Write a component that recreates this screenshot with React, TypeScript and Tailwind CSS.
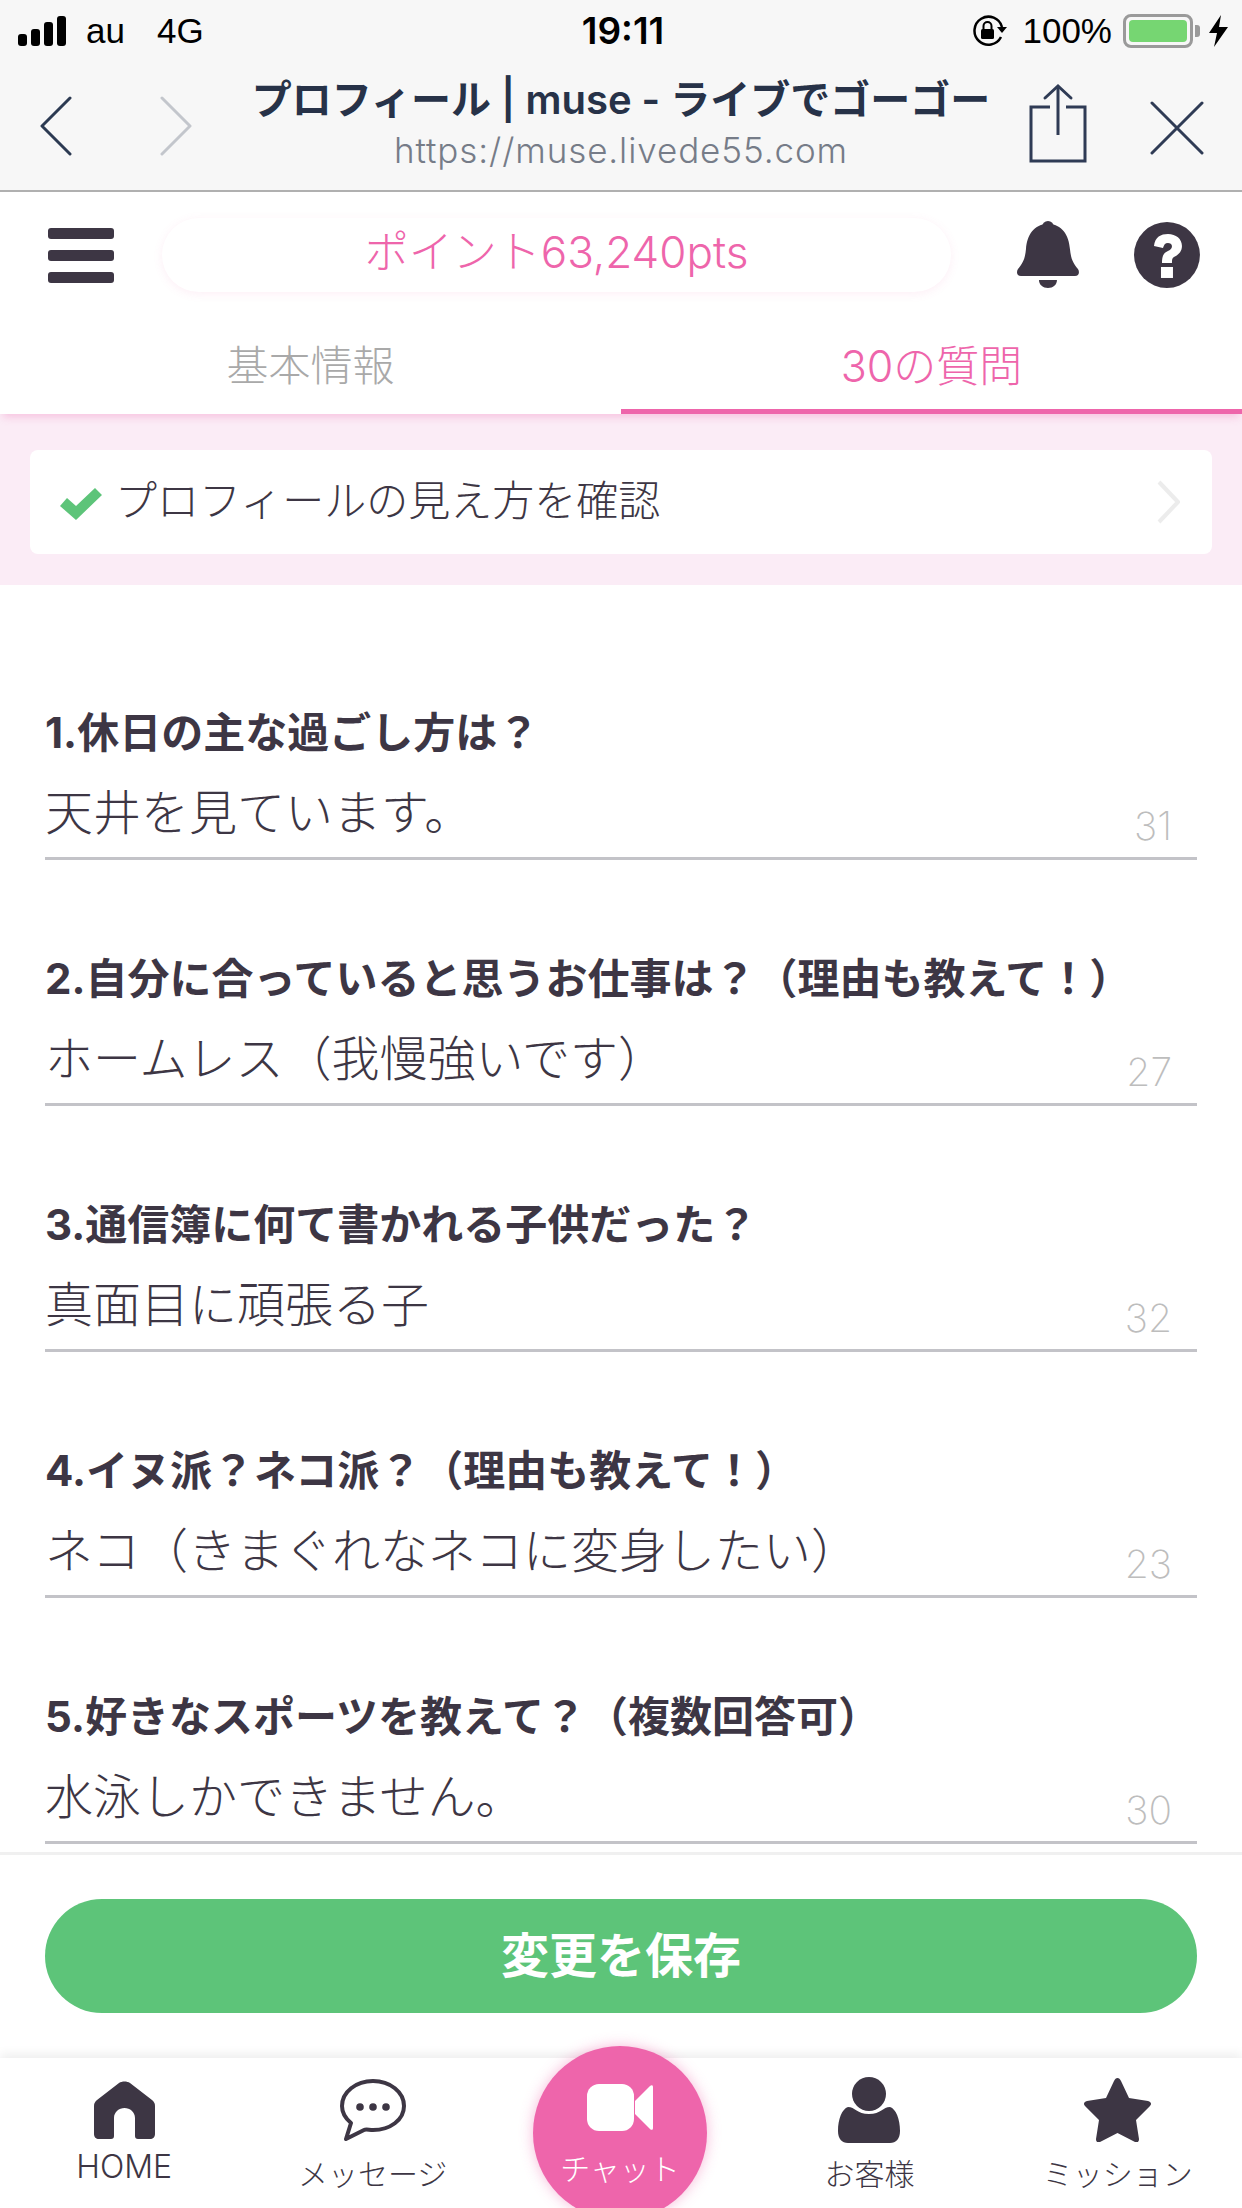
const INK = '#3d3644'

const questions = [
  { label: '1.休日の主な過ごし方は？', answer: '天井を見ています。', count: 31 },
  { label: '2.自分に合っていると思うお仕事は？（理由も教えて！）', answer: 'ホームレス（我慢強いです）', count: 27 },
  { label: '3.通信簿に何て書かれる子供だった？', answer: '真面目に頑張る子', count: 32 },
  { label: '4.イヌ派？ネコ派？（理由も教えて！）', answer: 'ネコ（きまぐれなネコに変身したい）', count: 23 },
  { label: '5.好きなスポーツを教えて？（複数回答可）', answer: '水泳しかできません。', count: 30 },
]

function StatusBar() {
  return (
    <div className="h-[60px] pt-[2px] flex items-center justify-between pl-[18px] pr-[14px] text-black text-[35px] font-['Liberation_Sans',sans-serif]">
      <div className="w-[420px] flex items-center">
        <svg width="48" height="30" viewBox="0 0 48 30" fill="#000">
          <rect x="0" y="18" width="9" height="12" rx="3" />
          <rect x="13" y="13" width="9" height="17" rx="3" />
          <rect x="26" y="6" width="9" height="24" rx="3" />
          <rect x="39" y="0" width="9" height="30" rx="3" />
        </svg>
        <span className="ml-[20px]">au</span>
        <span className="ml-[32px]">4G</span>
      </div>
      <span className="font-['Inter',sans-serif] font-semibold text-[37px]">19:11</span>
      <div className="w-[420px] flex items-center justify-end">
        <svg width="36" height="32" viewBox="0 0 36 32" fill="none">
          <path d="M29 22 A14 14 0 1 1 30 12" stroke="#000" strokeWidth="2.5" />
          <path d="M25 12 H35 L30 18 Z" fill="#000" />
          <rect x="9" y="14" width="13" height="10" rx="1.5" fill="#000" />
          <path d="M11.5 14 V11 A4 4 0 0 1 19.5 11 V14" stroke="#000" strokeWidth="2" />
        </svg>
        <span className="ml-[14px]">100%</span>
        <div className="ml-[11px] w-[70px] h-[34px] rounded-[8px] border-[3px] border-[#9a9a9a] p-[3px]">
          <div className="w-full h-full rounded-[4px] bg-[#76d672]"></div>
        </div>
        <div className="ml-[2px] w-[5px] h-[12px] bg-[#9a9a9a] rounded-r-[3px]"></div>
        <svg className="ml-[9px]" width="19" height="32" viewBox="0 0 19 32" fill="#000">
          <path d="M12 0 L0 18 H8 L5 32 L19 12 H10 Z" />
        </svg>
      </div>
    </div>
  )
}

function BrowserBar() {
  return (
    <div className="h-[132px] flex items-center border-b-[2px] border-[#b0b0b0]">
      <div className="w-[232px] flex items-center pl-[40px] pt-[2px]">
        <svg width="32" height="60" viewBox="0 0 32 60" fill="none" stroke="#2c3a52" strokeWidth="3" strokeLinecap="round" strokeLinejoin="round">
          <path d="M30 2 L2 30 L30 58" />
        </svg>
        <svg className="ml-[88px]" width="32" height="60" viewBox="0 0 32 60" fill="none" stroke="#c3c6cc" strokeWidth="3" strokeLinecap="round" strokeLinejoin="round">
          <path d="M2 2 L30 30 L2 58" />
        </svg>
      </div>
      <div className="flex-1 flex flex-col items-center min-w-0">
        <p className="text-[40px] leading-[50px] font-semibold text-[#273248] whitespace-nowrap">プロフィール | muse - ライブでゴーゴー</p>
        <p className="text-[35px] leading-[50px] tracking-[0.9px] font-light text-[#767c88] whitespace-nowrap">https://muse.livede55.com</p>
      </div>
      <div className="w-[232px] flex items-center pl-[19px]">
        <svg className="mb-[4px]" width="58" height="80" viewBox="0 0 58 80" fill="none" stroke="#2f3b55" strokeWidth="3">
          <path d="M21 24 H2 V78 H56 V24 H37" />
          <path d="M29 52 V3" />
          <path d="M16 15 L29 3 L42 15" strokeLinecap="round" />
        </svg>
        <svg className="ml-[63px] mt-[5px]" width="54" height="54" viewBox="0 0 54 54" fill="none" stroke="#2f3b55" strokeWidth="3" strokeLinecap="round">
          <path d="M2 2 L52 52 M52 2 L2 52" />
        </svg>
      </div>
    </div>
  )
}

function Header() {
  return (
    <div className="h-[120px] flex items-center pl-[48px] pr-[42px] pt-[6px]">
      <div className="w-[66px] flex flex-col gap-[11px]">
        <div className="h-[11px] rounded-[3px] bg-[#3d3644]"></div>
        <div className="h-[11px] rounded-[3px] bg-[#3d3644]"></div>
        <div className="h-[11px] rounded-[3px] bg-[#3d3644]"></div>
      </div>
      <div className="ml-[48px] w-[790px] h-[74px] pb-[6px] rounded-full bg-white shadow-[0_2px_10px_rgba(240,100,170,0.1)] flex items-center justify-center text-[#ee65ab] text-[44px] font-light">
        ポイント63,240pts
      </div>
      <svg className="ml-[65px]" width="64" height="68" viewBox="0 0 64 68" fill={INK}>
        <circle cx="32" cy="6" r="6" />
        <path d="M32 3 C46 3 53 14 54 28 C55 38 57 42 62 48 C64 51 63 55 59 55 H5 C1 55 0 51 2 48 C7 42 9 38 10 28 C11 14 18 3 32 3 Z" />
        <path d="M23 59 H41 C41 64 37 67 32 67 C27 67 23 64 23 59 Z" />
      </svg>
      <svg className="ml-[54px]" width="66" height="66" viewBox="0 0 66 66">
        <circle cx="33" cy="33" r="33" fill={INK} />
        <path d="M20 24 C21 15 27 12 34 12 C42 12 48 17 48 24 C48 30 44 33 40 35 C38 36 38 38 38 41 H28 C28 35 29 31 34 29 C37 28 38 26 38 24 C38 22 36 21 34 21 C31 21 30 23 29 26 Z" fill="#fff" />
        <rect x="27" y="45" width="12" height="11" fill="#fff" />
      </svg>
    </div>
  )
}

function Tabs() {
  return (
    <div className="relative z-10 grid grid-cols-2 h-[102px] bg-white shadow-[0_6px_8px_-3px_rgba(238,101,171,0.3)]">
      <div className="flex items-start justify-center pt-[24px] text-[42px] leading-[60px] font-light text-[#a9a9a9]">基本情報</div>
      <div className="flex items-start justify-center pt-[24px] text-[43px] leading-[60px] font-light text-[#ee65ab] border-b-[5px] border-[#ee65ab]">30の質問</div>
    </div>
  )
}

function PreviewLink() {
  return (
    <div className="bg-[#fbecf6] h-[171px] px-[30px] pt-[36px]">
      <div className="h-[104px] rounded-[8px] bg-white flex items-center pl-[30px] pr-[30px]">
        <svg className="mt-[4px]" width="42" height="32" viewBox="0 0 42 32" fill="#5dc479">
          <path d="M0 18 L7 10 L16 18 L35 0 L42 7 L16 32 Z" />
        </svg>
        <span className="ml-[13px] mb-[3px] flex-1 text-[42px] font-light text-[#3d3644]">プロフィールの見え方を確認</span>
        <svg width="26" height="44" viewBox="0 0 26 44" fill="none" stroke="#ececec" strokeWidth="4" strokeLinejoin="round">
          <path d="M3 2 L22 22 L3 42" />
        </svg>
      </div>
    </div>
  )
}

function QuestionRow({ label, answer, count }: { label: string; answer: string; count: number }) {
  return (
    <div className="mb-[91px]">
      <p className="text-[42px] leading-[56px] font-bold text-[#3d3644] whitespace-nowrap">{label}</p>
      <div className="h-[96px] flex items-end justify-between border-b-[3px] border-[#c3c3c8] box-content">
        <span className="pb-[14px] text-[48px] leading-[60px] font-light text-[#3d3644]">{answer}</span>
        <span className="pb-[11px] pr-[25px] text-[39px] leading-[40px] font-extralight text-[#bdbdbd]">{count}</span>
      </div>
    </div>
  )
}

function NavItem({ label, icon, labelClass }: { label: string; icon: React.ReactNode; labelClass: string }) {
  return (
    <div className="flex flex-col items-center">
      <div className="h-[68px] flex items-center justify-center">{icon}</div>
      <span className={labelClass}>{label}</span>
    </div>
  )
}

function BottomNav() {
  return (
    <div className="relative h-[150px] bg-white shadow-[0_-4px_10px_rgba(0,0,0,0.07)]">
      <div className="grid grid-cols-5 pt-[18px]">
        <NavItem
          label="HOME"
          labelClass="mt-[3px] text-[32px] leading-[40px] font-light text-[#3d3644]"
          icon={
            <svg width="61" height="58" viewBox="0 0 61 58" fill={INK}>
              <path d="M25 2 C28 0 33 0 36 2 L58 19 C60 21 61 22 61 25 V53 C61 56 59 58 56 58 H44 C42 58 41 57 41 55 V37 C41 31 36 27 30.5 27 C25 27 20 31 20 37 V55 C20 57 19 58 17 58 H5 C2 58 0 56 0 53 V25 C0 22 1 21 3 19 Z" />
            </svg>
          }
        />
        <NavItem
          label="メッセージ"
          labelClass="mt-[10px] text-[30px] leading-[40px] font-light text-[#3d3644]"
          icon={
            <svg width="66" height="62" viewBox="0 0 66 62" fill="none">
              <path d="M33 2 C50 2 64 13 64 27 C64 41 50 51 33 51 C29 51 26 50 24 51 L6 60 L11 44 C5 39 2 34 2 27 C2 13 16 2 33 2 Z" stroke={INK} strokeWidth="4" strokeLinejoin="round" />
              <circle cx="20" cy="28" r="3.8" fill={INK} />
              <circle cx="33" cy="28" r="3.8" fill={INK} />
              <circle cx="46" cy="28" r="3.8" fill={INK} />
            </svg>
          }
        />
        <div></div>
        <NavItem
          label="お客様"
          labelClass="mt-[10px] text-[30px] leading-[40px] font-light text-[#3d3644]"
          icon={
            <svg width="62" height="66" viewBox="0 0 62 66" fill={INK}>
              <circle cx="31" cy="17" r="17" />
              <path d="M10 30 C17 30 19 37 31 37 C43 37 45 30 52 30 C58 32 62 42 62 54 C62 62 58 66 52 66 H10 C4 66 0 62 0 54 C0 42 4 32 10 30 Z" />
            </svg>
          }
        />
        <NavItem
          label="ミッション"
          labelClass="mt-[10px] text-[30px] leading-[40px] font-light text-[#3d3644]"
          icon={
            <svg width="67" height="64" viewBox="0 0 67 64" fill={INK}>
              <path d="M33.5 0 C35 0 36 1 37 3 L45 20 L64 23 C67 24 68 26 66 28 L52 42 L55 61 C55 64 53 65 51 64 L33.5 55 L16 64 C14 65 12 64 12 61 L15 42 L1 28 C-1 26 0 24 3 23 L22 20 L30 3 C31 1 32 0 33.5 0 Z" />
            </svg>
          }
        />
      </div>
      <div className="absolute left-[533px] top-[-12px] w-[174px] h-[174px] rounded-full bg-[#ee65ab] shadow-[0_0_14px_rgba(238,101,171,0.45)] flex flex-col items-center pt-[38px]">
        <svg width="66" height="47" viewBox="0 0 66 47" fill="#fff">
          <rect x="0" y="0" width="47" height="47" rx="12" />
          <path d="M48 17 L63 2 C64.5 0.5 66 1 66 3 V44 C66 46 64.5 46.5 63 45 L48 30 Z" />
        </svg>
        <span className="mt-[18px] text-[30px] leading-[40px] font-light text-white">チャット</span>
      </div>
    </div>
  )
}

export default function App() {
  return (
    <div className="w-[1242px] h-[2208px] overflow-hidden flex flex-col bg-white font-['Inter','Noto_Sans_CJK_JP',sans-serif]">
      <div className="bg-[#f7f7f7]">
        <StatusBar />
        <BrowserBar />
      </div>
      <Header />
      <Tabs />
      <PreviewLink />
      <main className="flex-1 min-h-0 overflow-hidden px-[45px] pt-[120px]">
        {questions.map((q) => (
          <QuestionRow key={q.count} label={q.label} answer={q.answer} count={q.count} />
        ))}
      </main>
      <div className="h-[206px] border-t-[3px] border-[#f0f0f0] px-[45px] pt-[44px]">
        <button className="w-full h-[114px] rounded-full bg-[#5dc479] text-white text-[48px] font-bold">変更を保存</button>
      </div>
      <BottomNav />
    </div>
  )
}
